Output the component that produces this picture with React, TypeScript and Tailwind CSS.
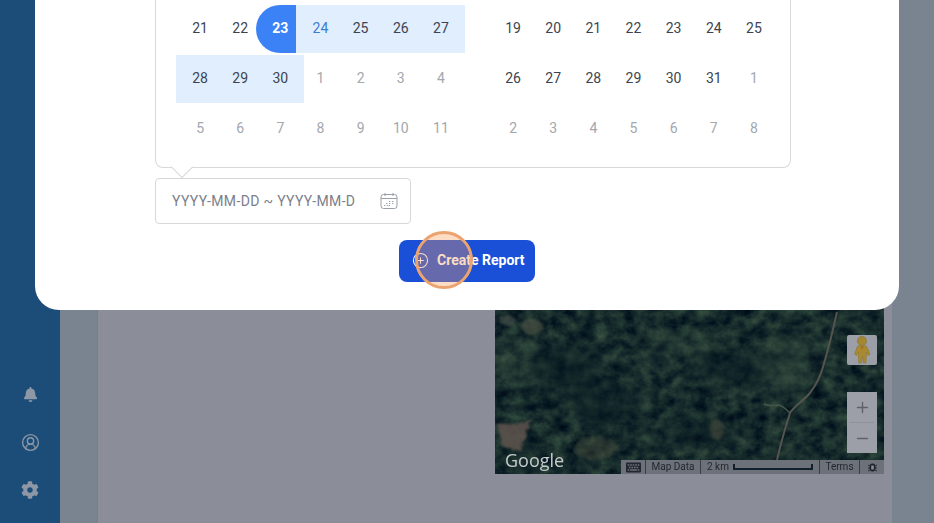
import React from 'react';
import { CirclePlus, CircleUserRound, Minus, Plus } from 'lucide-react';
import { FaBell, FaCog, FaKeyboard } from 'react-icons/fa';

const leftMonth = [
  ['21', '22', '23', '24', '25', '26', '27'],
  ['28', '29', '30', '1', '2', '3', '4'],
  ['5', '6', '7', '8', '9', '10', '11'],
];

const rightMonth = [
  ['19', '20', '21', '22', '23', '24', '25'],
  ['26', '27', '28', '29', '30', '31', '1'],
  ['2', '3', '4', '5', '6', '7', '8'],
];

const LeftCell: React.FC<{ row: number; col: number; label: string }> = ({ row, col, label }) => {
  const muted = (row === 1 && col > 2) || row === 2;
  const inRange = (row === 0 && col > 2) || (row === 1 && col < 3);
  let cls = 'h-12 flex items-center justify-center text-sm pb-[2px] ';
  if (row === 0 && col === 2) {
    return (
      <div className="h-12 ml-[-4px] mr-[4px] pl-2 pb-[2px] flex items-center justify-center text-sm font-bold text-white bg-[#3b82f6] rounded-l-[24px]">
        {label}
      </div>
    );
  }
  if (inRange) cls += 'bg-[#e0eefd] ';
  if (row === 0 && col === 3) cls += 'text-[#3b7fd0] ml-[-4px] pl-1 ';
  else if (muted) cls += 'text-[#a4a7ad] ';
  else cls += 'text-[#3d4451] ';
  if (row === 0 && col === 6) cls += 'mr-[-4px] pr-1 ';
  if (row === 1 && col === 0) cls += 'ml-[-4px] pl-1 ';
  if (row === 1 && col === 2) cls += 'mr-[-4px] pr-1 ';
  return <div className={cls}>{label}</div>;
};

const CalendarIcon = () => (
  <svg width="18" height="18" viewBox="0 0 18 18" fill="none" stroke="#9a9ea6" strokeWidth="1">
    <rect x="1" y="2.5" width="16" height="14" rx="2.5" />
    <path d="M1 6.5h16M5 1v3M13 1v3" />
    <path d="M9 9.5h1.5M12 9.5h2M6 11.5h2M9 11.5h1.5M12 11.5h2M4 13.5h2M7 13.5h3" strokeDasharray="1.2 .6" />
  </svg>
);

const Pegman = () => (
  <svg width="20" height="28" viewBox="0 0 20 28">
    <circle cx="10" cy="5" r="4.6" fill="#a48732" stroke="#86702a" strokeWidth=".6" />
    <path d="M5.5 10h9l3.5 8-2 1.5-1.6-3.500-.4 11h-2.600l-1-7-1 7H6.700l-.4-11-1.700 3.500L2.500 18z" fill="#a98a30" stroke="#86702a" strokeWidth=".5" />
    <path d="M8 10.500l2 3.500 2-3.500" fill="#a8702c" />
  </svg>
);

const SatelliteMap = () => (
  <svg className="absolute inset-0 w-full h-full" viewBox="0 0 389 310" preserveAspectRatio="none">
    <defs>
      <filter id="forest" x="0" y="0" width="100%" height="100%" colorInterpolationFilters="sRGB">
        <feTurbulence type="fractalNoise" baseFrequency="0.07 0.085" numOctaves="5" seed="8" />
        <feColorMatrix
          type="matrix"
          values="0.3 0 0 0 -0.06
                  0.36 0 0 0 -0.01
                  0.2 0 0 0 0.07
                  0 0 0 0 1"
        />
      </filter>
      <filter id="rough" x="-20%" y="-20%" width="140%" height="140%" colorInterpolationFilters="sRGB">
        <feTurbulence type="fractalNoise" baseFrequency="0.12" numOctaves="3" seed="3" />
        <feDisplacementMap in="SourceGraphic" scale="6" />
        <feGaussianBlur stdDeviation="1.2" />
      </filter>
      <filter id="blur" colorInterpolationFilters="sRGB">
        <feGaussianBlur stdDeviation="9" />
      </filter>
    </defs>
    <rect width="389" height="310" filter="url(#forest)" />
    <g filter="url(#blur)" fill="#0c1e24" opacity="0.55">
      <ellipse cx="70" cy="205" rx="35" ry="25" />
      <ellipse cx="110" cy="240" rx="38" ry="22" />
      <ellipse cx="200" cy="270" rx="40" ry="12" />
      <ellipse cx="240" cy="205" rx="42" ry="16" />
    </g>
    <g filter="url(#blur)" fill="#3d5544" opacity="0.4">
      <ellipse cx="180" cy="180" rx="40" ry="10" />
      <ellipse cx="290" cy="200" rx="26" ry="30" />
      <ellipse cx="20" cy="200" rx="16" ry="30" />
    </g>
    <g filter="url(#rough)">
      <path d="M2 260l20 2 15-9-7 19-5 14-17-4z" fill="#645650" opacity=".8" />
      <ellipse cx="38" cy="163" rx="10" ry="8" fill="#4e5344" opacity=".6" />
      <ellipse cx="12" cy="156" rx="8" ry="5" fill="#50544e" opacity=".5" />
      <ellipse cx="100" cy="284" rx="22" ry="12" fill="#46493a" opacity=".4" />
      <ellipse cx="222" cy="266" rx="7" ry="10" fill="#55503e" opacity=".4" />
    </g>
    <path d="M342 148c-4 18-9 38-14 55-3 11-7 18-13 26-7 8-17 14-20 20-5 15-9 30-13 47" fill="none" stroke="#55544f" strokeWidth="2" />
    <path d="M295 249c-4-4-8-8-12-8-6 1-10 1-14-1" fill="none" stroke="#46564a" strokeWidth="1.500" />
  </svg>
);

const App: React.FC = () => {
  return (
    <div className="relative flex w-[934px] h-[523px] overflow-hidden bg-[#7a8490] font-['Roboto',sans-serif]">
      {/* Sidebar */}
      <aside className="w-[60px] bg-[#1c4d78] flex flex-col items-center justify-end pb-[9px] text-[#8e97a5]">
        <div className="h-12 flex items-center">{FaBell({ size: 15 })}</div>
        <div className="h-12 flex items-center">
          <CircleUserRound size={19} strokeWidth={1.700} />
        </div>
        <div className="h-12 flex items-center">{FaCog({ size: 18 })}</div>
      </aside>

      {/* Page behind the modal */}
      <main className="flex-1 pl-[37px] pr-[42px]">
        <div className="h-full bg-[#8b8e98] border-l border-[#757e8b] pl-[397px] pr-2">
          <div className="relative h-[474px] overflow-hidden bg-[#13282c]">
            <div className="absolute left-0 right-0 bottom-0 h-[310px]">
              <SatelliteMap />
            </div>
            <div className="absolute right-[7px] top-[335px] w-[30px] h-[30px] bg-[#9c9fa8] rounded-[2px] flex items-center justify-center">
              <Pegman />
            </div>
            <div className="absolute right-[7px] top-[392px] w-[30px] h-[61px] bg-[#9c9fa8] flex flex-col items-center text-[#5e626b]">
              <div className="h-[30px] flex items-center justify-center">
                <Plus size={17} strokeWidth={2} />
              </div>
              <div className="w-[24px] h-px bg-[#8e9199]" />
              <div className="h-[30px] flex items-center justify-center">
                <Minus size={17} strokeWidth={2} />
              </div>
            </div>
            <span className="absolute left-[10px] bottom-[2px] text-[18px] leading-[24px] text-[#c6cbcd] font-['Open_Sans',sans-serif]">
              Google
            </span>
            <div className="absolute right-0 bottom-0 h-[14px] w-[263px] flex items-center bg-[#6d717a] text-[10px] leading-[14px] text-[#23272f]">
              <div className="w-[25px] h-full flex items-center justify-center border-r border-[#3a3e47]">
                {FaKeyboard({ size: 15 })}
              </div>
              <div className="w-[55px] h-full text-center border-r border-[#3a3e47]">Map Data</div>
              <div className="w-[119px] h-full flex items-center gap-[4px] pl-[6px] border-r border-[#3a3e47]">
                2 km
                <span className="block w-[80px] h-[6px] border-x-2 border-b-2 border-[#12202e]" />
              </div>
              <div className="w-[40px] h-full text-center border-r border-[#3a3e47]">Terms</div>
              <div className="flex-1 flex items-center justify-center">
                <svg width="9" height="10" viewBox="0 0 9 10" fill="#1d2129">
                  <ellipse cx="4.500" cy="5.500" rx="3" ry="4" />
                  <path d="M0 3l2 1M9 3L7 4M0 6h2M9 6H7M0 9l2-1M9 9L7 8" stroke="#1d2129" strokeWidth=".8" />
                  <rect x="3.200" y="3.500" width="2.600" height="4" fill="#8b8e98" />
                </svg>
              </div>
            </div>
          </div>
        </div>
      </main>

      {/* Modal, scrolled so only its lower part shows */}
      <section className="absolute left-[35px] top-0 w-[864px] h-[310px] bg-white rounded-b-[24px] pl-[120px]">
        <div className="relative w-[636px] h-[168px] border-x border-b border-[#d6d8db] rounded-b-[8px] pl-[24px] pr-[16px] pt-[5px] flex gap-[32px]">
          <div className="w-[282px] ml-0 grid grid-cols-7 gap-y-[2px] content-start">
            {leftMonth.map((week, r) =>
              week.map((d, c) => <LeftCell key={`${r}-${c}`} row={r} col={c} label={d} />),
            )}
          </div>
          <div className="w-[282px] grid grid-cols-7 gap-y-[2px] content-start">
            {rightMonth.map((week, r) =>
              week.map((d, c) => (
                <div
                  key={`${r}-${c}`}
                  className={`h-12 pb-[2px] flex items-center justify-center text-sm ${
                    r === 2 || (r === 1 && c === 6) ? 'text-[#a4a7ad]' : 'text-[#3d4451]'
                  }`}
                >
                  {d}
                </div>
              )),
            )}
          </div>
          {/* Popover arrow */}
          <div className="absolute left-[18px] bottom-[-8px] w-[16px] h-[16px] rotate-45 bg-white border-r border-b border-[#d6d8db]" />
        </div>
        <div className="mt-[10px] w-[256px] h-[46px] border border-[#d6d8db] rounded-[4px] pl-4 pr-[12px] flex items-center justify-between bg-white">
          <span className="text-sm tracking-[0.35px] text-[#7b808a] whitespace-nowrap pb-px">YYYY-MM-DD ~ YYYY-MM-D</span>
          <CalendarIcon />
        </div>
        <div className="relative mt-4 ml-[244px] w-[136px]">
          <button className="w-[136px] h-[42px] pb-[2px] rounded-[8px] bg-[#1a4fd8] text-white text-sm font-bold flex items-center gap-[8px] pl-[13px]">
            <CirclePlus size={17} strokeWidth={1.500} />
            Create Report
          </button>
          {/* Click marker */}
          <div className="absolute left-[16px] top-[-9px] w-[58px] h-[58px] rounded-full border-[3px] border-[#eba46f] bg-[#f59a5a]/35" />
        </div>
      </section>
    </div>
  );
};

export default App;
